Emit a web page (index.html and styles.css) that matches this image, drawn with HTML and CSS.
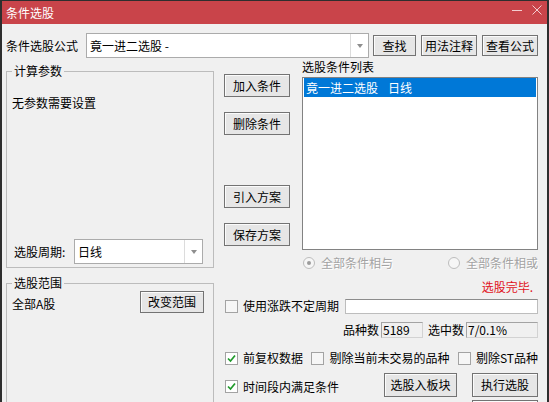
FILE: index.html
```html
<!DOCTYPE html>
<html lang="zh-CN">
<head>
  <meta charset="UTF-8" />
  <title>条件选股</title>
  <link rel="stylesheet" href="styles.css">
</head>
<body>

  <div class="window">
    <div class="titlebar">
      <span class="title">条件选股</span>
      <div class="win-ctrls">
        <svg width="10" height="10" viewBox="0 0 10 10"><line x1="0" y1="5.5" x2="10" y2="5.5" stroke="#f3cdd0" stroke-width="1"/></svg>
        <svg width="10" height="10" viewBox="0 0 10 10"><path d="M0.5 0.5L9.5 9.5M9.5 0.5L0.5 9.5" stroke="#f3cdd0" stroke-width="1" fill="none"/></svg>
      </div>
    </div>

    <div class="content">
      <!-- formula row -->
      <div class="formula-row">
        <span class="row-label">条件选股公式</span>
        <div class="combo formula-combo">
          <span class="combo-text">竟一进二选股 -</span>
          <span class="combo-arrow"></span>
        </div>
        <button class="btn btn-find">查找</button>
        <button class="btn btn-wide">用法注释</button>
        <button class="btn btn-wide btn-last">查看公式</button>
      </div>

      <div class="main">
        <div class="left-col">
          <fieldset class="group group-params">
            <legend>计算参数</legend>
            <div class="params">
              <p class="note">无参数需要设置</p>
              <div class="period-row">
                <span class="period-label">选股周期:</span>
                <div class="combo period-combo">
                  <span class="combo-text">日线</span>
                  <span class="combo-arrow"></span>
                </div>
              </div>
            </div>
          </fieldset>

          <fieldset class="group group-range">
            <legend>选股范围</legend>
            <div class="range-row">
              <span class="range-text">全部A股</span>
              <button class="btn btn-range">改变范围</button>
            </div>
          </fieldset>
        </div>

        <div class="right-col">
          <div class="top-section">
            <div class="action-col">
              <button class="btn btn-add">加入条件</button>
              <button class="btn btn-del">删除条件</button>
              <button class="btn btn-import">引入方案</button>
              <button class="btn btn-save">保存方案</button>
            </div>
            <div class="list-col">
              <div class="list-label">选股条件列表</div>
              <div class="listbox">
                <div class="list-item selected">竟一进二选股<span class="item-period">日线</span></div>
              </div>
              <div class="radios">
                <span class="radio"><span class="radio-dot on"></span>全部条件相与</span>
                <span class="radio"><span class="radio-dot"></span>全部条件相或</span>
              </div>
            </div>
          </div>

          <div class="status">选股完毕.</div>

          <div class="period-check-row">
            <span class="check"></span>
            <span>使用涨跌不定周期</span>
            <span class="period-input"></span>
          </div>

          <div class="count-row">
            <span>品种数</span>
            <span class="count-box total">5189</span>
            <span>选中数</span>
            <span class="count-box picked">7/0.1%</span>
          </div>

          <div class="options-row">
            <span class="option">
              <span class="check checked"><svg width="11" height="11" viewBox="0 0 11 11"><polyline points="2,5.5 4.5,8 9,2.5" fill="none" stroke="#1f9a2b" stroke-width="1.7"/></svg></span>
              前复权数据
            </span>
            <span class="option"><span class="check"></span>剔除当前未交易的品种</span>
            <span class="option"><span class="check"></span>剔除ST品种</span>
          </div>

          <div class="submit-row">
            <span class="option">
              <span class="check checked"><svg width="11" height="11" viewBox="0 0 11 11"><polyline points="2,5.5 4.5,8 9,2.5" fill="none" stroke="#1f9a2b" stroke-width="1.7"/></svg></span>
              时间段内满足条件
            </span>
            <button class="btn btn-block">选股入板块</button>
            <button class="btn btn-run">执行选股</button>
          </div>

          <div class="more-row">
            <button class="btn btn-run" aria-label="更多"></button>
          </div>
        </div>
      </div>
    </div>
  </div>

</body>
</html>
```

FILE: styles.css
```css
body {
  margin: 0;
  background: #f0f0f0;
  font-family: "Noto Sans CJK SC", "Microsoft YaHei", sans-serif;
  font-size: 12px;
  line-height: 16px;
  color: #000;
  overflow: hidden;
}

.window {
  width: 549px;
  height: 460px;
  box-sizing: border-box;
  border: 2px solid #2e2e2e;
  border-top-width: 1px;
  background: #f0f0f0;
  overflow: hidden;
}

.titlebar {
  height: 23px;
  background: #c9444a;
  color: #fff;
  display: flex;
  align-items: center;
  justify-content: space-between;
  padding: 0 5px 0 4px;
}

.win-ctrls {
  align-self: flex-start;
  padding-top: 4px;
  display: flex;
  gap: 10px;
}

.win-ctrls svg {
  display: block;
}

.content {
  padding: 0 9px 0 4px;
}

.formula-row {
  display: flex;
  align-items: center;
  height: 25px;
  margin-top: 9px;
}

.row-label {
  margin-right: 8px;
}

.combo {
  display: flex;
  align-items: center;
  box-sizing: border-box;
  background: #fff;
  border: 1px solid #ababab;
}

.combo-text {
  flex: 1;
  padding-left: 3px;
  white-space: nowrap;
}

.combo-arrow {
  width: 17px;
  align-self: stretch;
  border-left: 1px solid #dcdcdc;
  display: flex;
  align-items: center;
  justify-content: center;
}

.combo-arrow::after {
  content: "";
  border-left: 3.5px solid transparent;
  border-right: 3.5px solid transparent;
  border-top: 4px solid #8e8e8e;
}

.formula-combo {
  flex: 1;
  height: 25px;
  margin-right: 4px;
}

.btn {
  font: inherit;
  color: #000;
  box-sizing: border-box;
  padding: 0;
  background: #e6e6e6;
  border: 1px solid #737373;
  border-radius: 0;
  box-shadow: inset 1px 1px 0 #fbfbfb;
  white-space: nowrap;
}

.btn-find {
  width: 43px;
  height: 21px;
  margin-right: 5px;
}

.btn-wide {
  width: 56px;
  height: 21px;
  margin-right: 5px;
}

.btn-last {
  margin-right: 0;
}

.main {
  display: grid;
  grid-template-columns: 208px 1fr;
  column-gap: 10px;
  margin-top: 1px;
}

.group {
  margin: 0;
  padding: 0 5px 3px;
  border: 1px solid #bcbcbc;
  min-width: 0;
}

.group legend {
  padding: 0 2px;
}

.group-params {
  margin-top: 4px;
}

.params {
  height: 185px;
  display: flex;
  flex-direction: column;
}

.note {
  margin: 16px 0 0;
}

.period-row {
  margin-top: auto;
  display: flex;
  align-items: center;
  padding-left: 2px;
}

.period-label {
  width: 60px;
}

.period-combo {
  width: 129px;
  height: 25px;
}

.group-range {
  margin-top: 7px;
  height: 150px;
}

.range-row {
  display: flex;
  justify-content: space-between;
  align-items: flex-start;
  padding-right: 4px;
}

.range-text {
  margin-top: 5px;
}

.btn-range {
  width: 64px;
  height: 22px;
}

.top-section {
  display: flex;
  gap: 12px;
}

.action-col {
  width: 66px;
  display: flex;
  flex-direction: column;
}

.action-col .btn {
  height: 23px;
  margin-top: 15px;
}

.action-col .btn-import {
  margin-top: 50px;
}

.list-col {
  flex: 1;
}

.listbox {
  margin-top: 2px;
  height: 173px;
  box-sizing: border-box;
  background: #fff;
  border: 1px solid #828282;
  padding: 0 1px;
}

.list-item {
  height: 19px;
  line-height: 19px;
  padding-left: 2px;
  white-space: nowrap;
}

.item-period {
  margin-left: 10px;
}

.list-item.selected {
  background: #0078d7;
  color: #fff;
}

.radios {
  margin-top: 5px;
  display: flex;
  justify-content: space-between;
  color: #a3a3a3;
  text-shadow: 1px 1px 0 #fff;
}

.radio {
  display: flex;
  align-items: center;
  gap: 6px;
}

.radio-dot {
  width: 12px;
  height: 12px;
  margin-left: 1px;
  box-sizing: border-box;
  border: 1px solid #bdbdbd;
  border-radius: 50%;
  background: #f6f6f6;
  display: flex;
  align-items: center;
  justify-content: center;
}

.radio-dot.on::after {
  content: "";
  width: 4px;
  height: 4px;
  border-radius: 50%;
  background: #9c9c9c;
}

.status {
  margin-top: 8px;
  padding-right: 5px;
  text-align: right;
  color: #e0121b;
}

.period-check-row {
  margin-top: 3px;
  display: flex;
  align-items: center;
}

.check {
  width: 13px;
  height: 13px;
  flex: none;
  box-sizing: border-box;
  margin: 0 5px 0 1px;
  border: 1px solid #a3a3a3;
  background: #f6f6f6;
  display: flex;
  align-items: center;
  justify-content: center;
}

.check.checked {
  background: #fff;
}

.check svg {
  display: block;
}

.period-input {
  flex: 1;
  height: 15px;
  margin-left: 6px;
  box-sizing: border-box;
  background: #fff;
  border: 1px solid #bdbdbd;
  border-top-color: #8c8c8c;
}

.count-row {
  margin-top: 8px;
  display: flex;
  justify-content: flex-end;
  align-items: center;
}

.count-box {
  height: 16px;
  box-sizing: border-box;
  margin-left: 2px;
  padding-left: 1px;
  line-height: 14px;
  border: 1px solid #d2d2d2;
  border-top-color: #a3a3a3;
  border-left-color: #a3a3a3;
}

.count-box.total {
  width: 42px;
  margin-right: 5px;
}

.count-box.picked {
  width: 72px;
}

.options-row {
  margin-top: 12px;
  display: flex;
  justify-content: space-between;
  align-items: center;
}

.option {
  display: flex;
  align-items: center;
}

.submit-row {
  margin-top: 7px;
  display: flex;
  align-items: center;
}

.submit-row .option {
  margin-right: auto;
  margin-top: 3px;
}

.btn-block {
  width: 73px;
  height: 24px;
  margin-right: 15px;
}

.btn-run {
  width: 66px;
  height: 24px;
}

.more-row {
  margin-top: 3px;
  display: flex;
  justify-content: flex-end;
}
```
